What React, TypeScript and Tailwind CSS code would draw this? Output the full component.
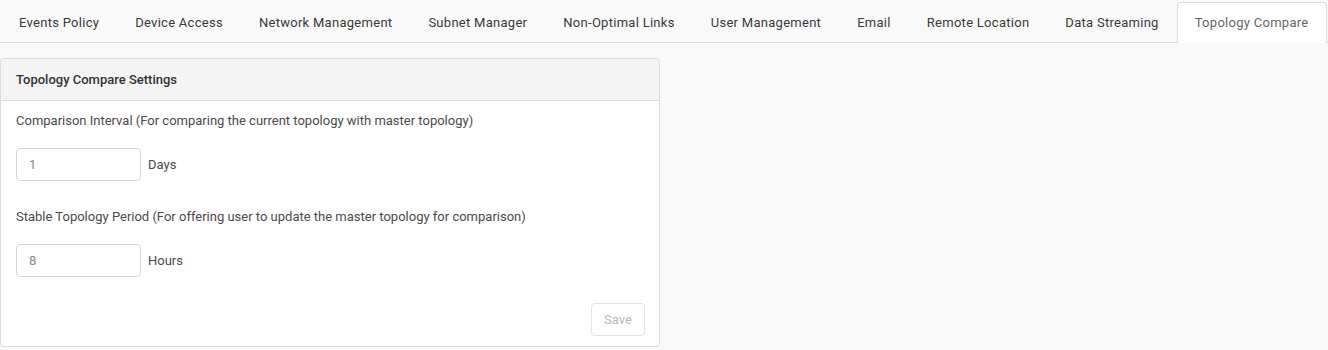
const TABS = [
  "Events Policy",
  "Device Access",
  "Network Management",
  "Subnet Manager",
  "Non-Optimal Links",
  "User Management",
  "Email",
  "Remote Location",
  "Data Streaming",
  "Topology Compare",
];

function Field({ label, value, unit }: { label: string; value: string; unit: string }) {
  return (
    <div className="flex flex-col">
      <div className="h-[20px] leading-[20px] text-[13px] text-[#4a4a4a]">{label}</div>
      <div className="mt-[17px] flex items-center gap-[7px]">
        <input
          readOnly
          value={value}
          className="h-[33px] w-[125px] rounded-[4px] border border-[#d6d6d6] bg-white px-[12px] text-[13px] text-[#888] outline-none"
        />
        <span className="text-[13px] text-[#4a4a4a]">{unit}</span>
      </div>
    </div>
  );
}

export default function App() {
  const active = "Topology Compare";
  return (
    <div className="h-[350px] w-[1328px] overflow-hidden bg-[#f9f9f9] font-['Roboto',sans-serif]">
      <div className="flex h-[43px] items-end border-b border-[#dcdcdc] pl-px">
        {TABS.map((tab) => {
          const isActive = tab === active;
          return (
            <div
              key={tab}
              className={[
                "-mb-px flex h-[41px] shrink-0 items-center whitespace-nowrap px-[17px] text-[13px] tracking-[0.28px]",
                isActive
                  ? "rounded-t-[4px] border border-b-0 border-[#dcdcdc] bg-white text-[#666]"
                  : "border border-transparent text-[#3a3a3a]",
              ].join(" ")}
            >
              {tab}
            </div>
          );
        })}
      </div>

      <div className="mt-[15px] w-[660px] rounded-[4px] border border-[#dcdcdc] bg-white">
        <div className="flex h-[42px] items-center rounded-t-[4px] border-b border-[#dcdcdc] bg-[#f4f4f4] px-[15px] text-[13px] font-medium text-[#333]">
          Topology Compare Settings
        </div>
        <div className="flex flex-col gap-[26px] px-[15px] pt-[10px]">
          <Field
            label="Comparison Interval (For comparing the current topology with master topology)"
            value="1"
            unit="Days"
          />
          <Field
            label="Stable Topology Period (For offering user to update the master topology for comparison)"
            value="8"
            unit="Hours"
          />
        </div>
        <div className="flex justify-end px-[14px] pb-[10px] pt-[26px]">
          <button className="h-[33px] w-[54px] rounded-[4px] border border-[#e3e3e3] bg-white text-[13px] text-[#bbb]">
            Save
          </button>
        </div>
      </div>
    </div>
  );
}
